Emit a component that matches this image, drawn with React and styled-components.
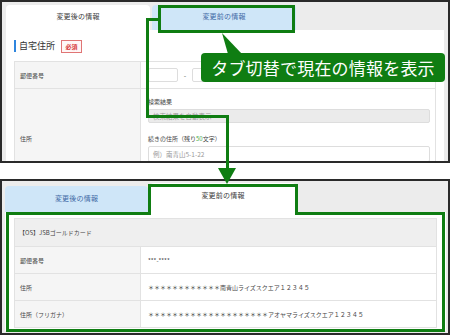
import React from "react";
import styled, { createGlobalStyle } from "styled-components";

const GREEN = "#0f7d12";
const FONT = `"Noto Sans CJK JP", "Noto Sans", sans-serif`;

const Global = createGlobalStyle`
  html, body { margin: 0; padding: 0; background: #ffffff; }
  body { font-family: ${FONT}; }
  * { box-sizing: border-box; }
`;

const Stage = styled.div`
  position: relative;
  width: 450px;
  height: 335px;
  overflow: hidden;
  display: flex;
  flex-direction: column;
  gap: 16px;
  background: #fff;
  font-family: ${FONT};
`;

const Frame = styled.section`
  height: ${(p) => p.$h}px;
  border: 2px solid #2a2a2a;
  background: #ececec;
  display: flex;
  flex-direction: column;
  padding: ${(p) => p.$pad};
  overflow: hidden;
  flex-shrink: 0;
`;

const TabRow = styled.div`
  display: flex;
  align-items: flex-end;
  gap: 2px;
  height: ${(p) => p.$h}px;
  flex-shrink: 0;
`;

const Tab = styled.div`
  width: ${(p) => p.$w}px;
  height: ${(p) => p.$h}px;
  border-radius: 4px 4px 0 0;
  background: ${(p) => (p.$active ? "#ffffff" : "#cfe6f8")};
  color: ${(p) => (p.$active ? "#3a3a3a" : "#3f6aa6")};
  font-size: 7px;
  display: flex;
  align-items: center;
  justify-content: center;
  padding-bottom: ${(p) => p.$pb || 2}px;
  letter-spacing: 0.2px;
`;

const Panel = styled.div`
  flex: 1;
  background: #ffffff;
  padding: ${(p) => p.$pad};
  display: flex;
  flex-direction: column;
  min-height: 0;
`;

const Heading = styled.div`
  display: flex;
  align-items: center;
  gap: 6px;
  height: 16px;
  flex-shrink: 0;
`;

const HeadingTitle = styled.h2`
  margin: 0;
  font-size: 9px;
  font-weight: 400;
  color: #333;
  border-left: 2px solid #2f86de;
  padding-left: 3px;
  line-height: 12px;
`;

const Badge = styled.span`
  border: 1px solid #e07575;
  background: #fff6f6;
  color: #d63a3a;
  font-size: 6px;
  font-weight: 700;
  height: 13px;
  width: 21px;
  display: inline-flex;
  align-items: center;
  justify-content: center;
`;

const Table = styled.div`
  display: grid;
  grid-template-columns: 126px 1fr;
  grid-auto-rows: ${(p) => p.$rows};
  border-top: 1px solid #e2e2e2;
  border-left: 1px solid #e2e2e2;
  border-right: 1px solid #e2e2e2;
  margin-top: ${(p) => p.$mt || 0}px;
  flex-shrink: 0;
`;

const HeaderCell = styled.div`
  grid-column: 1 / span 2;
  background: #efefef;
  border-bottom: 1px solid #e2e2e2;
  font-size: 6px;
  color: #444;
  display: flex;
  align-items: center;
  padding-left: 4px;
`;

const LabelCell = styled.div`
  background: #f5f5f5;
  border-right: 1px solid #e2e2e2;
  border-bottom: 1px solid #e2e2e2;
  font-size: 6px;
  color: #444;
  display: flex;
  align-items: center;
  padding-left: 5px;
  height: ${(p) => (p.$h ? `${p.$h}px` : "auto")};
`;

const ValueCell = styled.div`
  border-bottom: 1px solid #e2e2e2;
  font-size: 6px;
  color: #444;
  display: flex;
  flex-direction: ${(p) => (p.$stack ? "column" : "row")};
  align-items: ${(p) => (p.$stack ? "stretch" : "center")};
  padding: ${(p) => (p.$stack ? "8px 5px 0 7px" : "0 5px 0 7px")};
  gap: ${(p) => (p.$gap ? `${p.$gap}px` : "0")};
  height: ${(p) => (p.$h ? `${p.$h}px` : "auto")};
  white-space: nowrap;
`;

const Input = styled.div`
  width: ${(p) => (p.$w ? `${p.$w}px` : "100%")};
  height: ${(p) => p.$h}px;
  border: 1px solid #dddddd;
  border-radius: 2px;
  background: ${(p) => (p.$disabled ? "#ebebeb" : "#ffffff")};
  color: #9a9a9a;
  font-size: 6.5px;
  display: flex;
  align-items: center;
  padding-left: 4px;
  flex-shrink: 0;
`;

const Dash = styled.span`
  width: 14px;
  text-align: center;
  color: #666;
  font-size: 7px;
`;

const FieldLabel = styled.div`
  font-size: 6px;
  color: #444;
  margin: ${(p) => p.$m || "0"};
`;

const Accent = styled.span`
  color: #4fae4f;
`;

const Overlay = styled.svg`
  position: absolute;
  left: 0;
  top: 0;
  width: 450px;
  height: 335px;
  pointer-events: none;
`;

const Callout = styled.div`
  position: absolute;
  left: 201px;
  top: 53px;
  width: 244px;
  height: 29px;
  border-radius: 4px;
  background: ${GREEN};
  color: #ffffff;
  font-size: 17px;
  line-height: 1;
  display: flex;
  align-items: center;
  justify-content: center;
  letter-spacing: 0.2px;
  padding-bottom: 1px;
`;

export default function App() {
  return (
    <>
      <Global />
      <Stage>
        <Frame $h={163} $pad="3px 4px 0 4px">
          <TabRow $h={25}>
            <Tab $active $w={144} $h={25} $pb={4}>変更後の情報</Tab>
            <Tab $w={144} $h={25} $pb={4}>変更前の情報</Tab>
          </TabRow>
          <Panel $pad="8px 8px 0 8px">
            <Heading>
              <HeadingTitle>自宅住所</HeadingTitle>
              <Badge>必須</Badge>
            </Heading>
            <Table $rows="auto" $mt={7}>
              <LabelCell $h={27}>郵便番号</LabelCell>
              <ValueCell $h={27}>
                <Input $w={30} $h={14} />
                <Dash>-</Dash>
                <Input $w={30} $h={14} />
              </ValueCell>
              <LabelCell $h={100}>住所</LabelCell>
              <ValueCell $stack $h={100}>
                <FieldLabel>検索結果</FieldLabel>
                <Input $disabled $h={14} style={{ marginTop: 3 }}>
                  検索結果を自動表示
                </Input>
                <FieldLabel $m="11px 0 3px 0">
                  続きの住所（残り<Accent>50</Accent>文字）
                </FieldLabel>
                <Input $h={16}>例）南青山5-1-22</Input>
              </ValueCell>
            </Table>
          </Panel>
        </Frame>

        <Frame $h={156} $pad="2px 2px 2px 3px">
          <TabRow $h={29}>
            <Tab $w={143} $h={26} $pb={2}>変更後の情報</Tab>
            <Tab $active $w={146} $h={29} $pb={5}>変更前の情報</Tab>
          </TabRow>
          <Panel $pad="6px 9px 0 9px">
            <Table $rows="27px" style={{ gridTemplateRows: "28px" }}>
              <HeaderCell>【OS】JSBゴールドカード</HeaderCell>
              <LabelCell>郵便番号</LabelCell>
              <ValueCell>***-****</ValueCell>
              <LabelCell>住所</LabelCell>
              <ValueCell>＊＊＊＊＊＊＊＊＊＊＊＊南青山ライズスクエア１２３４５</ValueCell>
              <LabelCell>住所（フリガナ）</LabelCell>
              <ValueCell>＊＊＊＊＊＊＊＊＊＊＊＊＊＊＊＊＊＊＊＊アオヤマライズスクエア１２３４５</ValueCell>
            </Table>
          </Panel>
        </Frame>

        <Overlay viewBox="0 0 450 335">
          <rect x="159.5" y="6.5" width="134" height="25" fill="none" stroke={GREEN} strokeWidth="3" />
          <polyline
            points="158,19.5 147.5,19.5 147.5,116.5 227.5,116.5 227.5,170"
            fill="none"
            stroke={GREEN}
            strokeWidth="3"
          />
          <polygon points="218,168 236,168 227,184" fill={GREEN} />
          <polygon points="222,33 228,54 242,54" fill={GREEN} />
          <polyline
            points="7.5,331 7.5,213.5 149.5,213.5 149.5,185.5 296.5,185.5 296.5,213.5 443.5,213.5 443.5,330.5 6,330.5"
            fill="none"
            stroke={GREEN}
            strokeWidth="3"
          />
        </Overlay>
        <Callout>タブ切替で現在の情報を表示</Callout>
      </Stage>
    </>
  );
}
